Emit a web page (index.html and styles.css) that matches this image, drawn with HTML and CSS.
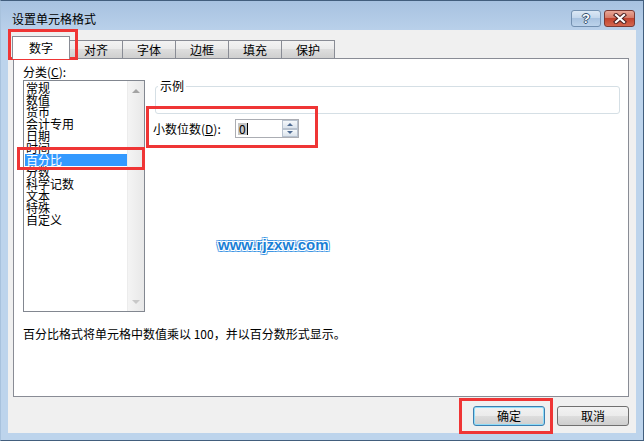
FILE: index.html
```html
<!DOCTYPE html>
<html lang="zh-CN">
<head>
  <meta charset="UTF-8" />
  <title>设置单元格格式</title>
  <link rel="stylesheet" href="styles.css">
</head>
<body>
  <div class="window">
    <div class="titlebar">
      <span class="title">设置单元格格式</span>
      <div class="caption-btns">
        <button class="cap-btn help">?</button>
        <button class="cap-btn close">
          <svg width="14" height="11" viewBox="0 0 14 11">
            <path d="M3 2 L11 9 M11 2 L3 9" stroke="#4b2020" stroke-width="4.2" stroke-linecap="square" fill="none"/>
            <path d="M3 2 L11 9 M11 2 L3 9" stroke="#fff" stroke-width="2.2" stroke-linecap="square" fill="none"/>
          </svg>
        </button>
      </div>
    </div>

    <div class="client">
      <div class="tabs">
        <div class="tab active">数字</div>
        <div class="tab">对齐</div>
        <div class="tab">字体</div>
        <div class="tab">边框</div>
        <div class="tab">填充</div>
        <div class="tab">保护</div>
      </div>

      <div class="panel">
        <div class="top-row">
          <div class="category">
            <div class="label">分类(<u>C</u>):</div>
            <div class="listbox">
              <ul class="items">
                <li>常规</li>
                <li>数值</li>
                <li>货币</li>
                <li>会计专用</li>
                <li>日期</li>
                <li>时间</li>
                <li class="selected">百分比</li>
                <li>分数</li>
                <li>科学记数</li>
                <li>文本</li>
                <li>特殊</li>
                <li>自定义</li>
              </ul>
              <div class="scrollbar">
                <span class="arrow up"></span>
                <span class="arrow down"></span>
              </div>
            </div>
          </div>

          <div class="options">
            <fieldset class="sample">
              <legend>示例</legend>
              <div class="sample-value"></div>
            </fieldset>
            <div class="decimal-row">
              <label class="decimal-label">小数位数(<u>D</u>):</label>
              <div class="spin">
                <span class="spin-value"><span class="sel">0</span></span>
                <div class="spin-btns">
                  <span class="spin-btn"><i class="tri up"></i></span>
                  <span class="spin-btn"><i class="tri down"></i></span>
                </div>
              </div>
            </div>
          </div>
        </div>
        <p class="desc">百分比格式将单元格中数值乘以 100，并以百分数形式显示。</p>
      </div>

      <div class="footer">
        <button class="btn default">确定</button>
        <button class="btn">取消</button>
      </div>
    </div>

    <div class="watermark">www.rjzxw.com</div>
    <div class="mark mark-tab"></div>
    <div class="mark mark-item"></div>
    <div class="mark mark-spin"></div>
    <div class="mark mark-ok"></div>
  </div>
</body>
</html>
```

FILE: styles.css
```css
body {
  margin: 0;
  font-family: "Noto Sans CJK SC", "Liberation Sans", sans-serif;
  font-size: 12px;
  color: #000;
}
.window {
  position: relative;
  width: 644px;
  height: 441px;
  box-sizing: border-box;
  border: 1px solid #425e7d;
  border-left-color: #a8c2dd;
  background: #bdd4ec;
  display: flex;
  flex-direction: column;
}
.titlebar {
  height: 29px;
  display: flex;
  justify-content: space-between;
  padding: 0 8px 0 11px;
  background: linear-gradient(#a7c2e0, #b9d0ea);
}
.title {
  line-height: 12px;
  margin-top: 12px;
}
.caption-btns {
  display: flex;
  gap: 3px;
  padding-top: 9px;
}
.cap-btn {
  height: 17px;
  padding: 0;
  border-radius: 3px;
  display: flex;
  align-items: center;
  justify-content: center;
}
.help {
  width: 30px;
  border: 1px solid #7390b0;
  background: linear-gradient(#dce8f5, #c4d7ec 45%, #a9c3e0 50%, #bcd3eb);
  font: bold 13px "Liberation Sans", sans-serif;
  color: #fff;
  text-shadow: 1px 0 #34506f, -1px 0 #34506f, 0 1px #34506f, 0 -1px #34506f;
}
.close {
  width: 31px;
  border: 1px solid #7a3a34;
  background: linear-gradient(#e9a797, #d57b69 45%, #c2432e 50%, #d4674f);
}
.client {
  flex: 1;
  margin: 0 7px 7px;
  background: #f0f0f0;
  padding: 6px 7px 0 5px;
}
.tabs {
  display: flex;
  align-items: flex-end;
  height: 22px;
}
.tab {
  height: 17px;
  line-height: 17px;
  padding: 0 14px;
  margin-left: -1px;
  border: 1px solid #898c95;
  border-bottom: 0;
  background: linear-gradient(#f3f3f3, #ebebeb 45%, #dddddd 50%, #cfcfcf);
}
.tab.active {
  position: relative;
  z-index: 1;
  height: 22px;
  line-height: 22px;
  padding: 0 16px;
  margin-bottom: -1px;
  background: #fff;
}
.panel {
  height: 339px;
  box-sizing: border-box;
  border: 1px solid #898c95;
  background: #fff;
  padding: 7px 8px 0 9px;
}
.top-row {
  display: flex;
}
.category {
  width: 122px;
}
.label {
  line-height: 12px;
}
.listbox {
  margin-top: 2px;
  height: 232px;
  box-sizing: border-box;
  border: 1px solid #828790;
  display: flex;
}
.items {
  flex: 1;
  list-style: none;
  margin: 0;
  padding: 1px 0 0 1px;
}
.items li {
  height: 12px;
  line-height: 12px;
  padding-left: 1px;
  white-space: nowrap;
}
.items li.selected {
  background: #3399ff;
  color: #fff;
}
.scrollbar {
  width: 17px;
  box-sizing: border-box;
  border-left: 1px solid #ececec;
  background: linear-gradient(90deg, #f4f4f4, #e8e8e8);
  display: flex;
  flex-direction: column;
  justify-content: space-between;
  align-items: center;
  padding: 8px 0 7px;
}
.arrow {
  width: 0;
  height: 0;
  border-left: 4px solid transparent;
  border-right: 4px solid transparent;
}
.arrow.up {
  border-bottom: 4px solid #a3a3a3;
}
.arrow.down {
  border-top: 4px solid #c8c8c8;
}
.options {
  flex: 1;
  margin-left: 8px;
}
.sample {
  margin: 14px 0 0 2px;
  padding: 0 0 0 2px;
  border: 1px solid #d5dfe5;
  border-radius: 3px;
}
.sample legend {
  padding: 0 2px;
  line-height: 12px;
}
.sample-value {
  height: 21px;
}
.decimal-row {
  display: flex;
  align-items: center;
  margin-top: 5px;
}
.decimal-label {
  width: 82px;
  line-height: 12px;
}
.spin {
  width: 64px;
  height: 19px;
  box-sizing: border-box;
  border: 1px solid #abadb3;
  display: flex;
}
.spin-value {
  flex: 1;
  padding: 3px 0 0 2px;
  line-height: 12px;
}
.sel {
  display: inline-block;
  padding: 0 1px;
  background: #c6c6c6;
  border-right: 1px solid #000;
}
.spin-btns {
  width: 16px;
  display: flex;
  flex-direction: column;
}
.spin-btn {
  flex: 1;
  border: 1px solid #b8c2cf;
  background: linear-gradient(#f5f8fb, #dbe3ec);
  display: flex;
  align-items: center;
  justify-content: center;
}
.tri {
  width: 0;
  height: 0;
  border-left: 3px solid transparent;
  border-right: 3px solid transparent;
}
.tri.up {
  border-bottom: 3px solid #4e6b92;
}
.tri.down {
  border-top: 3px solid #4e6b92;
}
.desc {
  margin: 16px 0 0;
  line-height: 12px;
}
.footer {
  display: flex;
  justify-content: flex-end;
  gap: 12px;
  padding-top: 9px;
}
.btn {
  width: 72px;
  height: 20px;
  padding: 0;
  border: 1px solid #707070;
  border-radius: 3px;
  background: linear-gradient(#f2f2f2, #ebebeb 50%, #dddddd 50%, #cfcfcf);
  font: inherit;
  line-height: 18px;
  color: #000;
}
.btn.default {
  border-color: #3c7fb1;
  box-shadow: inset 0 0 0 1px #8fdcf8;
}
.watermark {
  position: absolute;
  left: 217px;
  top: 235px;
  font: bold 15px "Liberation Sans", Arial, sans-serif;
  color: #1a7fd6;
  text-shadow: 1px 0 #fff, -1px 0 #fff, 0 1px #fff, 0 -1px #fff,
    1px 1px #fff, -1px -1px #fff, 1px -1px #fff, -1px 1px #fff,
    2px 0 #3f95e3, -2px 0 #3f95e3, 0 2px #3f95e3, 0 -2px #3f95e3,
    2px 2px #7db8ee, -2px -2px #7db8ee, 2px -2px #7db8ee, -2px 2px #7db8ee;
}
.mark {
  position: absolute;
  box-sizing: border-box;
  border: 3px solid #ef3535;
}
.mark-tab {
  left: 7px;
  top: 28px;
  width: 70px;
  height: 31px;
}
.mark-item {
  left: 16px;
  top: 146px;
  width: 128px;
  height: 23px;
}
.mark-spin {
  left: 145px;
  top: 105px;
  width: 172px;
  height: 42px;
}
.mark-ok {
  left: 458px;
  top: 397px;
  width: 94px;
  height: 36px;
}
```
